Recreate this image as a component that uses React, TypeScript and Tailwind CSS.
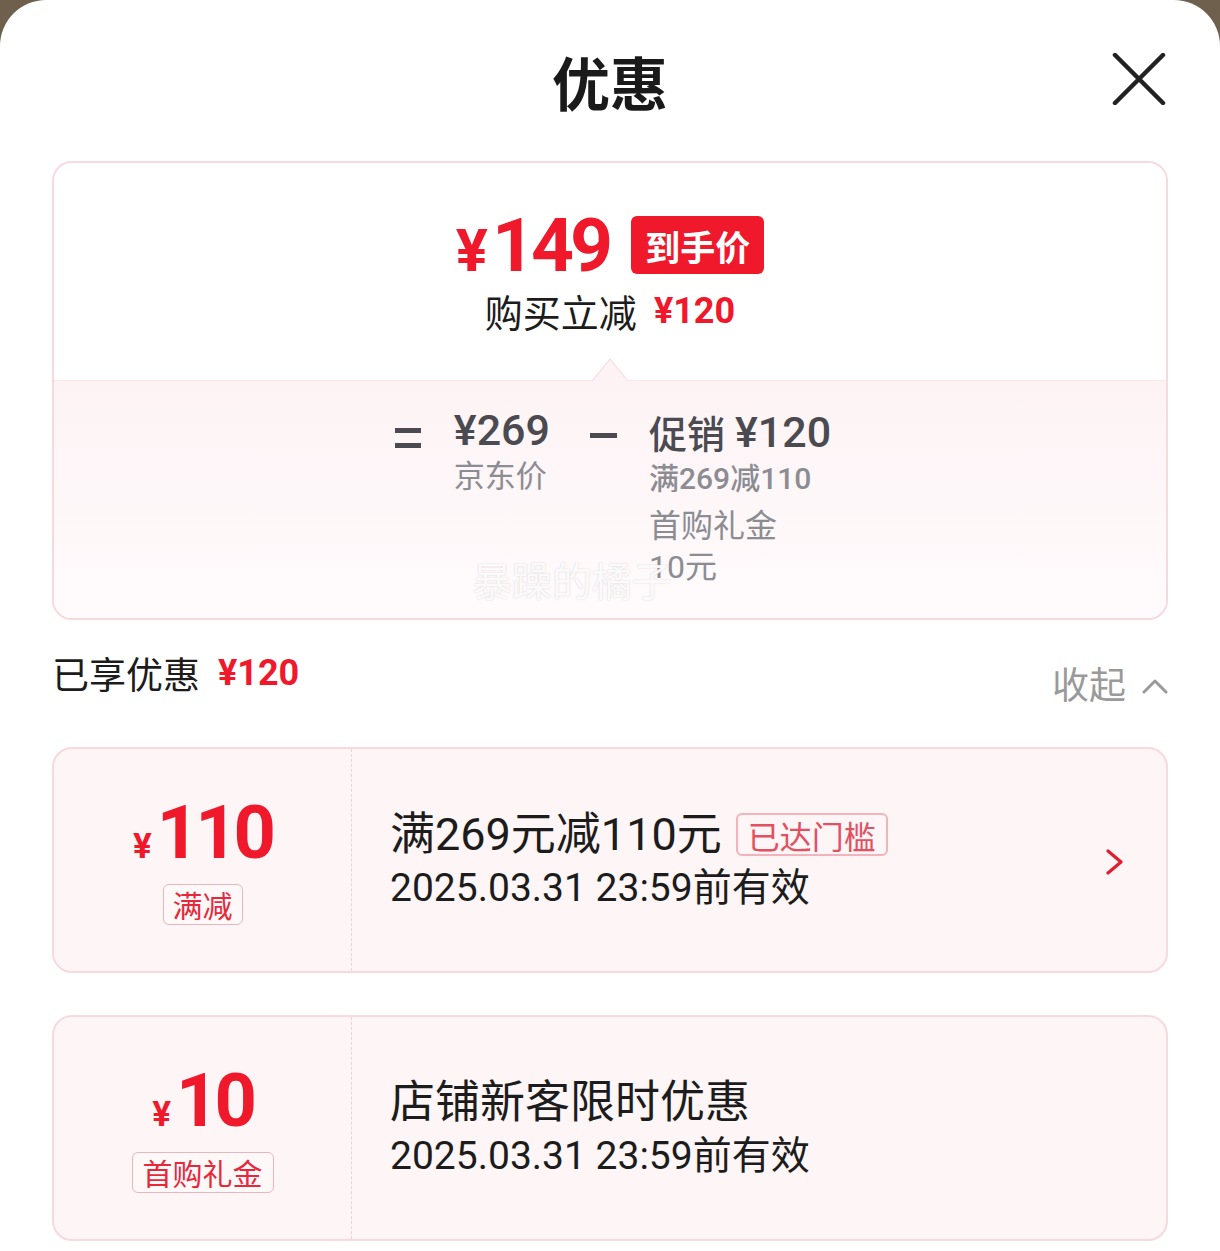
import React from "react";

const cjk = "font-['Noto_Sans_CJK_SC',sans-serif]";
const mix = "font-['Roboto','Noto_Sans_CJK_SC',sans-serif]";
const RED = "text-[#f0182b]";

function Coupon({
  amount,
  tag,
  title,
  badge,
  arrow,
  tagWide,
}: {
  amount: string;
  tag: string;
  title: string;
  badge?: string;
  arrow?: boolean;
  tagWide?: boolean;
}) {
  return (
    <div className="h-[226px] flex rounded-[20px] border-2 border-[#f7d9de] bg-[#fdf5f6]">
      <div className="w-[298px] shrink-0 flex flex-col items-center justify-center border-r border-dashed border-[#ecd3d8]">
        <div className={`flex items-baseline ${RED} ${mix} font-bold leading-none`}>
          <span className="text-[35px] mr-[5px]">¥</span>
          <span className="text-[74px] tracking-[-4px]">{amount}</span>
        </div>
        <div
          className={`mt-[14px] h-[41px] flex items-center rounded-[6px] border border-[#e8b6be] bg-[#fff8f9] text-[#e8283a] ${cjk} text-[30px] leading-none ${
            tagWide ? "px-[10px]" : "px-[9px]"
          }`}
        >
          {tag}
        </div>
      </div>
      <div className="flex-1 flex items-center pl-[38px] pr-[42px]">
        <div className="flex-1 flex flex-col">
          <div className="flex items-center h-[52px]">
            <span className={`${mix} text-[45px] leading-[52px] text-[#1c1c1c]`}>{title}</span>
            {badge && (
              <span
                className={`ml-[14px] h-[43px] px-[10px] flex items-center rounded-[6px] border-2 border-[#f1b3bc] text-[#e3505f] ${cjk} text-[32px] leading-none`}
              >
                {badge}
              </span>
            )}
          </div>
          <div className={`mt-[3px] ${mix} text-[39px] leading-[48px] text-[#1c1c1c]`}>
            2025.03.31 23:59前有效
          </div>
        </div>
        {arrow && (
          <svg width="18" height="26" viewBox="0 0 18 26" className="shrink-0 mt-[4px]">
            <polyline
              points="2,2 15,13 2,24"
              fill="none"
              stroke="#e01e2e"
              strokeWidth="3.2"
              strokeLinecap="round"
              strokeLinejoin="round"
            />
          </svg>
        )}
      </div>
    </div>
  );
}

export default function App() {
  return (
    <div className="w-[1220px] h-[1251px] bg-[#6e604d] overflow-hidden">
      <div className="h-[1251px] bg-white rounded-t-[46px] px-[52px]">
        {/* header */}
        <div className="relative h-[161px] flex items-center justify-center">
          <span className={`${cjk} font-bold text-[58px] leading-none text-[#1a1a1a]`}>优惠</span>
          <svg
            className="absolute right-[2px] top-[53px]"
            width="54"
            height="52"
            viewBox="0 0 54 52"
          >
            <line x1="3" y1="2" x2="51" y2="50" stroke="#222" strokeWidth="4.5" strokeLinecap="round" />
            <line x1="51" y1="2" x2="3" y2="50" stroke="#222" strokeWidth="4.5" strokeLinecap="round" />
          </svg>
        </div>

        {/* summary card */}
        <div className="relative h-[459px] rounded-[20px] border-2 border-[#f9d8de] overflow-hidden flex flex-col">
          <div className="h-[217px] bg-white flex flex-col items-center pt-[47px]">
            <div className="flex items-center h-[70px]">
              <div className={`flex items-baseline ${RED} ${mix} font-bold leading-none`}>
                <span className="text-[60px] mr-[4px]">¥</span>
                <span className="text-[75px] tracking-[-4px]">149</span>
              </div>
              <div
                className={`ml-[22px] h-[58px] px-[14px] flex items-center rounded-[6px] bg-[#f0182b] text-white ${cjk} font-bold text-[35px] leading-none`}
              >
                到手价
              </div>
            </div>
            <div className="mt-[9px] flex items-center h-[44px]">
              <span className={`${cjk} text-[38px] leading-none text-[#1c1c1c]`}>购买立减</span>
              <span className={`ml-[17px] ${mix} font-bold text-[36px] leading-none ${RED}`}>¥120</span>
            </div>
          </div>
          <div className="relative flex-1 border-t border-[#fbe6ea] bg-gradient-to-b from-[#fdf3f5] to-[#fffbfc]">
            <svg
              className="absolute left-[538px] top-[-23px]"
              width="36"
              height="24"
              viewBox="0 0 36 24"
            >
              <polygon points="0,23 18,1 36,23" fill="#fdf3f5" />
              <polyline points="0,23 18,1 36,23" fill="none" stroke="#f9e0e5" strokeWidth="1.2" />
            </svg>
            <div className="flex justify-center items-start pt-[26px] pl-[6px]">
              <div className="mt-[21px] w-[26px] flex flex-col gap-[10px]">
                <div className="h-[5px] bg-[#4a4a50]" />
                <div className="h-[5px] bg-[#4a4a50]" />
              </div>
              <div className="ml-[33px] flex flex-col">
                <span className={`${mix} font-medium text-[43px] leading-[46px] text-[#4a4a50]`}>¥269</span>
                <span className={`${cjk} text-[31px] leading-[42px] text-[#8c8c93]`}>京东价</span>
              </div>
              <div className="ml-[40px] mt-[26px] w-[27px] h-[5px] bg-[#4a4a50]" />
              <div className="ml-[32px] flex flex-col">
                <div className="flex items-center h-[46px] mt-[2px]">
                  <span className={`${cjk} font-medium text-[38px] leading-none text-[#4a4a50]`}>促销</span>
                  <span className={`ml-[10px] ${mix} font-medium text-[43px] leading-none text-[#4a4a50]`}>¥120</span>
                </div>
                <span className={`mt-[2px] ${mix} font-medium text-[30px] leading-[44px] text-[#8c8c93]`}>满269减110</span>
                <span className={`${cjk} text-[32px] leading-[44px] text-[#8c8c93]`}>首购礼金</span>
                <span className={`${mix} text-[32px] leading-[44px] text-[#8c8c93]`}>10元</span>
              </div>
            </div>
          </div>
          <span
            className={`absolute left-[418px] top-[396px] ${cjk} text-[40px] leading-none text-white/90 [text-shadow:0_0_1.5px_rgba(120,110,115,0.35)] select-none`}
          >
            暴躁的橘子
          </span>
        </div>

        {/* enjoyed row */}
        <div className="mt-[30px] h-[50px] flex justify-between items-start">
          <div className="flex items-center h-[46px]">
            <span className={`${cjk} text-[37px] leading-none text-[#1c1c1c]`}>已享优惠</span>
            <span className={`ml-[18px] ${mix} font-bold text-[36px] leading-none ${RED}`}>¥120</span>
          </div>
          <div className="mt-[10px] flex items-center h-[46px]">
            <span className={`${cjk} text-[37px] leading-none text-[#9a9a9a]`}>收起</span>
            <svg className="ml-[16px] mt-[6px]" width="26" height="16" viewBox="0 0 26 16">
              <polyline
                points="2,14 13,3 24,14"
                fill="none"
                stroke="#9a9a9a"
                strokeWidth="3"
                strokeLinecap="round"
                strokeLinejoin="round"
              />
            </svg>
          </div>
        </div>

        <div className="mt-[47px]">
          <Coupon amount="110" tag="满减" title="满269元减110元" badge="已达门槛" arrow />
        </div>
        <div className="mt-[42px]">
          <Coupon amount="10" tag="首购礼金" title="店铺新客限时优惠" tagWide />
        </div>
      </div>
    </div>
  );
}
